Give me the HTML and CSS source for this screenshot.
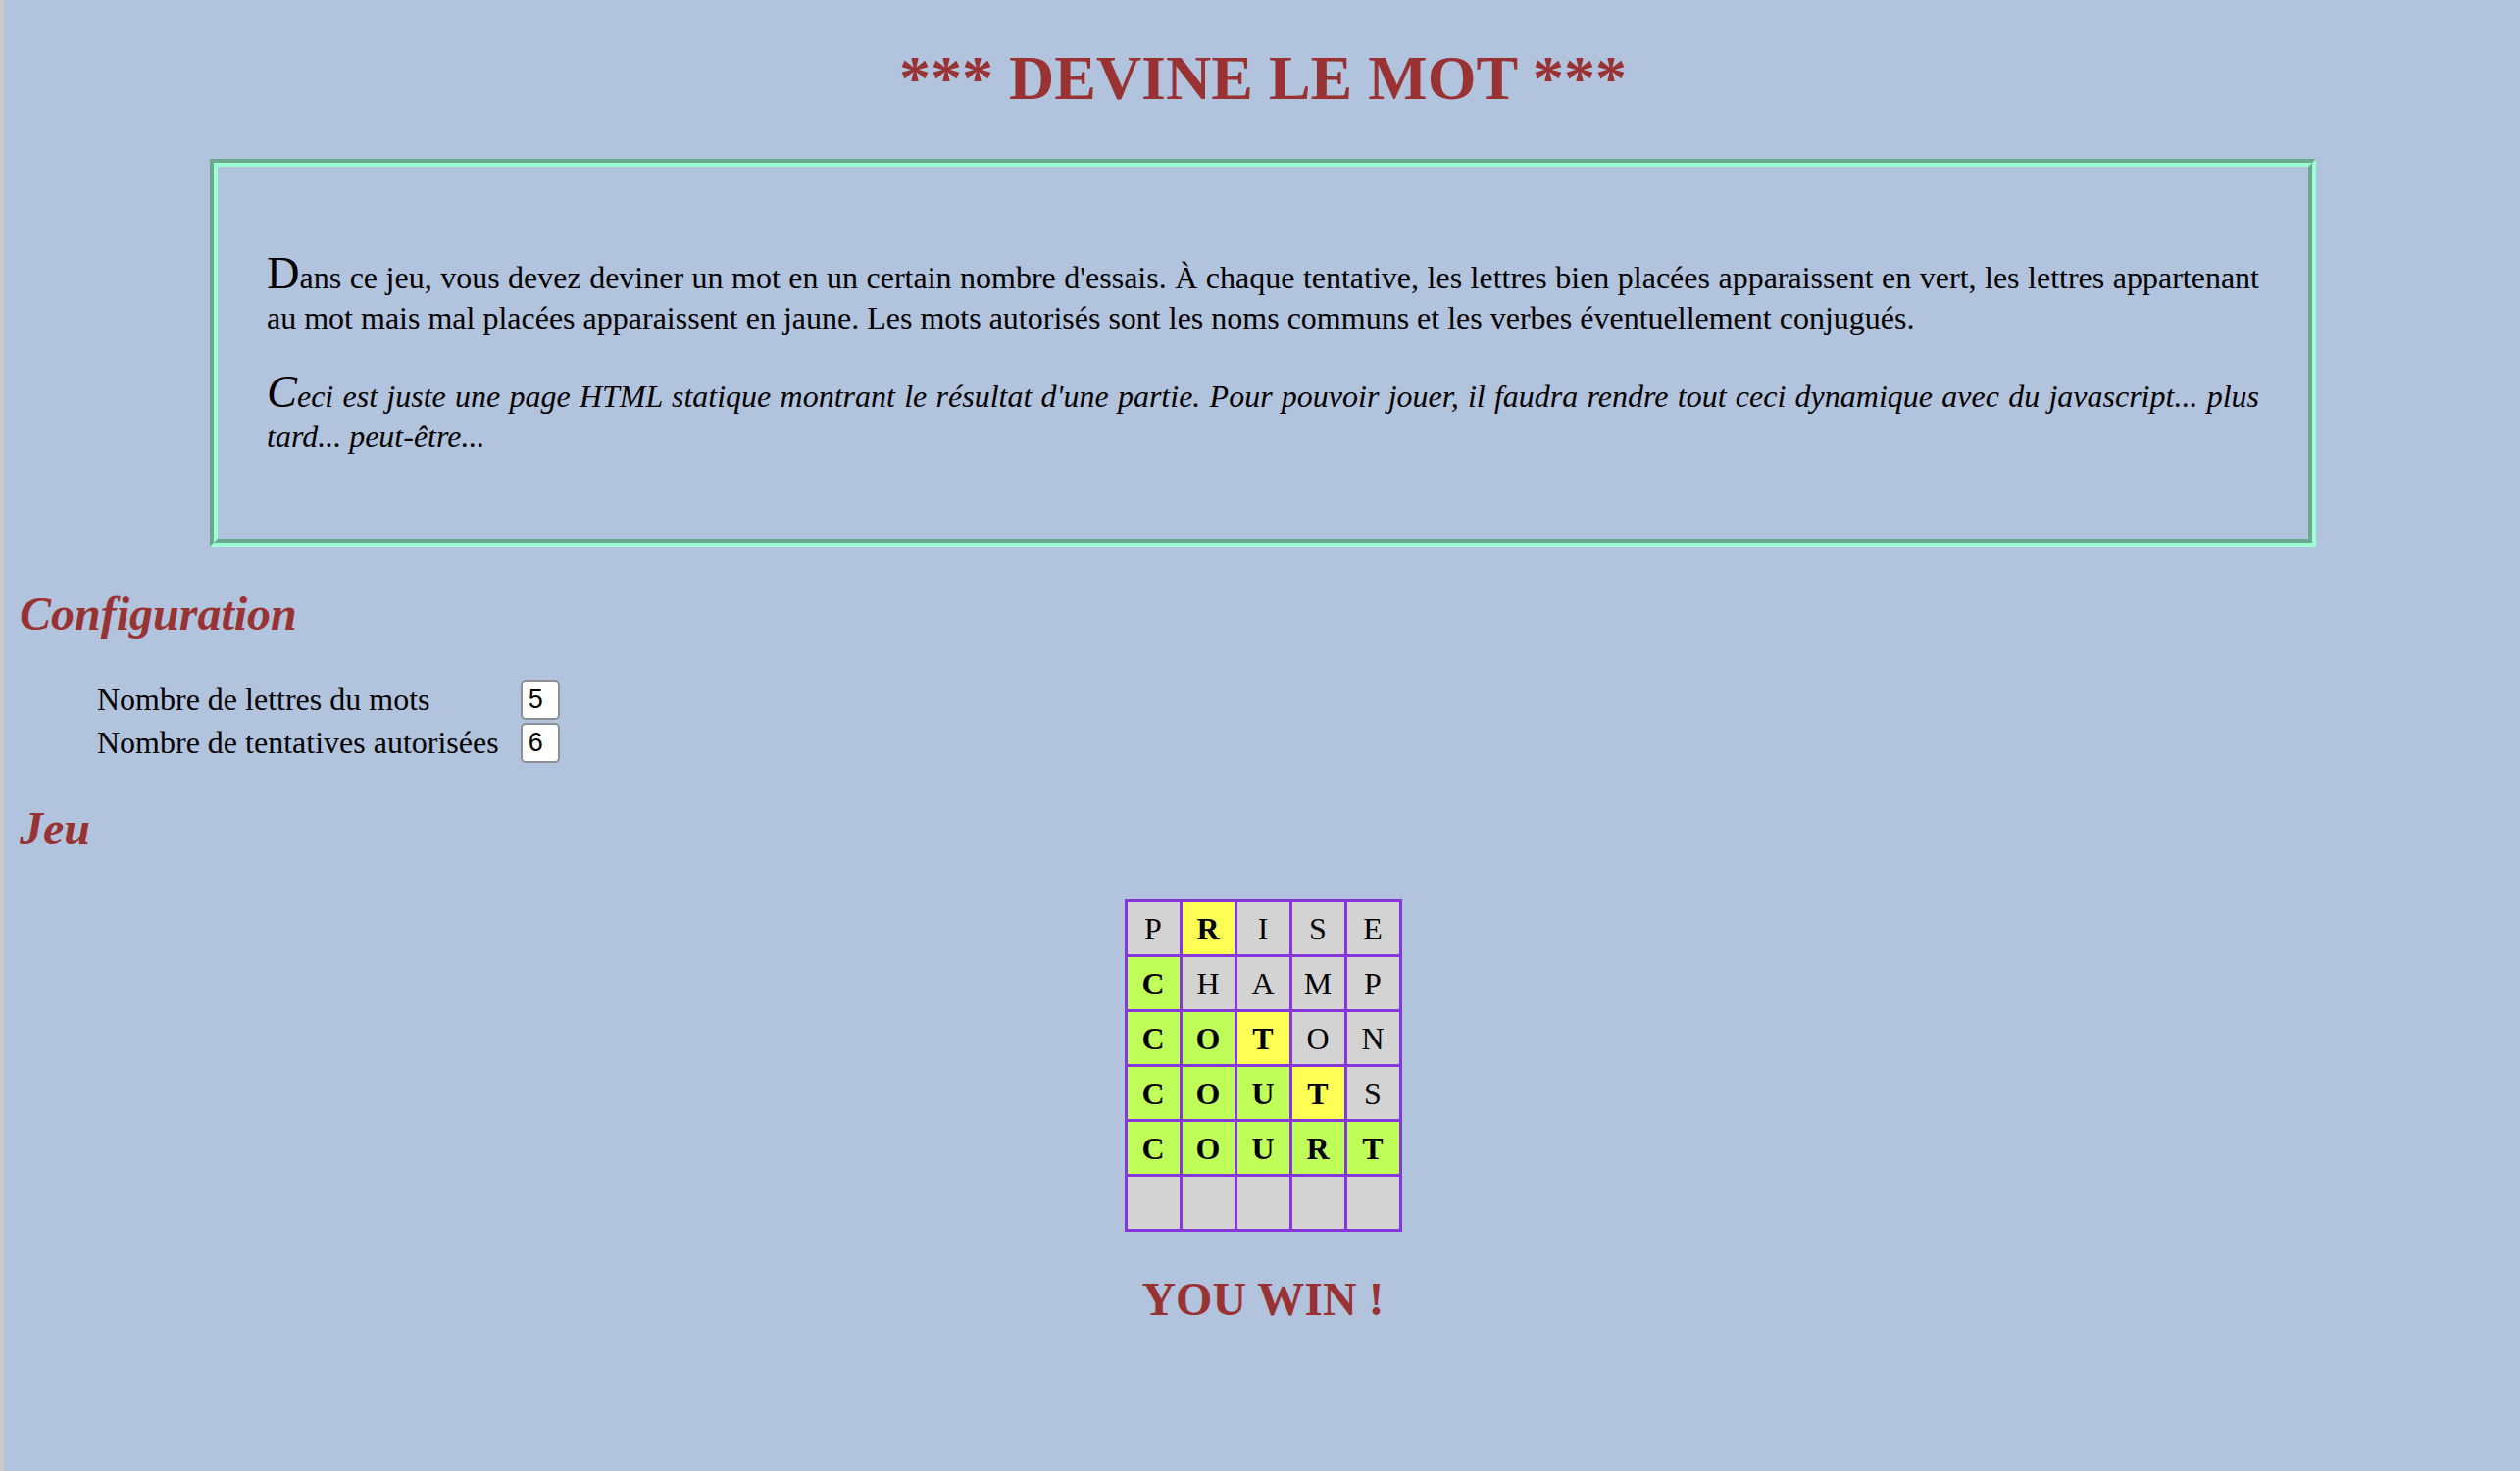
FILE: index.html
```html
<!DOCTYPE html>
<html lang="fr">
<head>
<meta charset="utf-8">
<title>Devine le mot</title>
<link rel="stylesheet" href="styles.css">
</head>
<body>
<h1 class="title">*** DEVINE LE MOT ***</h1>

<div class="intro">
  <div class="intro-inner">
    <p class="rules">Dans ce jeu, vous devez deviner un mot en un certain nombre d'essais. À chaque tentative, les lettres bien placées apparaissent en vert, les lettres appartenant au mot mais mal placées apparaissent en jaune. Les mots autorisés sont les noms communs et les verbes éventuellement conjugués.</p>
    <p class="rules note">Ceci est juste une page HTML statique montrant le résultat d'une partie. Pour pouvoir jouer, il faudra rendre tout ceci dynamique avec du javascript... plus tard... peut-être...</p>
  </div>
</div>

<h2 class="section">Configuration</h2>
<div class="config">
  <label class="config-label" for="nb-lettres">Nombre de lettres du mots</label>
  <input class="config-input" id="nb-lettres" type="text" value="5">
  <label class="config-label" for="nb-essais">Nombre de tentatives autorisées</label>
  <input class="config-input" id="nb-essais" type="text" value="6">
</div>

<h2 class="section">Jeu</h2>
<div class="board">
  <div class="cell">P</div><div class="cell misplaced">R</div><div class="cell">I</div><div class="cell">S</div><div class="cell">E</div>
  <div class="cell good">C</div><div class="cell">H</div><div class="cell">A</div><div class="cell">M</div><div class="cell">P</div>
  <div class="cell good">C</div><div class="cell good">O</div><div class="cell misplaced">T</div><div class="cell">O</div><div class="cell">N</div>
  <div class="cell good">C</div><div class="cell good">O</div><div class="cell good">U</div><div class="cell misplaced">T</div><div class="cell">S</div>
  <div class="cell good">C</div><div class="cell good">O</div><div class="cell good">U</div><div class="cell good">R</div><div class="cell good">T</div>
  <div class="cell"></div><div class="cell"></div><div class="cell"></div><div class="cell"></div><div class="cell"></div>
</div>

<h2 class="result">YOU WIN !</h2>
</body>
</html>
```

FILE: styles.css
```css
html {
  background: #b1c3dd;
  min-height: 100%;
  box-sizing: border-box;
  border-left: 4px solid #c9c9cc;
}

body {
  margin: 0 14px 16px 16px;
  padding-top: 1px;
  font-family: "Liberation Serif", "Times New Roman", serif;
  font-size: 32px;
  color: #000;
}

.title {
  margin: 42px 0 45px;
  font-size: 64px;
  font-weight: bold;
  text-align: center;
  color: #993333;
}

.intro {
  width: 84.7%;
  margin: 0 auto;
  box-sizing: border-box;
  border: 4px solid;
  border-color: #6ba98f #9effd5 #9effd5 #6ba98f;
}

.intro-inner {
  border: 4px solid;
  border-color: #9effd5 #6ba98f #6ba98f #9effd5;
  padding: 54px 50px 50px;
}

.rules {
  margin: 34px 0;
  font-size: 32px;
  line-height: 41px;
  text-align: justify;
}

.rules::first-letter {
  font-size: 1.45em;
}

.note {
  font-style: italic;
}

.section {
  margin: 40px 0;
  font-size: 48px;
  font-weight: bold;
  font-style: italic;
  color: #993333;
}

.config {
  display: grid;
  grid-template-columns: max-content 40px;
  grid-auto-rows: 40px;
  column-gap: 22px;
  row-gap: 4px;
  align-items: center;
  padding-left: 79px;
}

.config-label {
  line-height: 36px;
}

.config-input {
  box-sizing: border-box;
  width: 40px;
  height: 41px;
  margin: 0;
  padding: 0 0 0 6px;
  border: 2px solid #8e8e95;
  border-radius: 5px;
  background: #fff;
  font-family: "Liberation Sans", Arial, sans-serif;
  font-size: 27px;
  color: #000;
}

.board {
  display: grid;
  grid-template-columns: repeat(5, 53px);
  grid-auto-rows: 53px;
  gap: 3px;
  padding: 3px;
  width: max-content;
  margin: 45px auto 0;
  background: #8636da;
}

.cell {
  background: #d3d3d3;
  text-align: center;
  line-height: 55px;
  font-size: 32px;
}

.misplaced {
  background: #ffff55;
  font-weight: bold;
}

.good {
  background: #c0ff5a;
  font-weight: bold;
}

.result {
  margin: 41px 0;
  font-size: 48px;
  font-weight: bold;
  text-align: center;
  color: #993333;
}
```
